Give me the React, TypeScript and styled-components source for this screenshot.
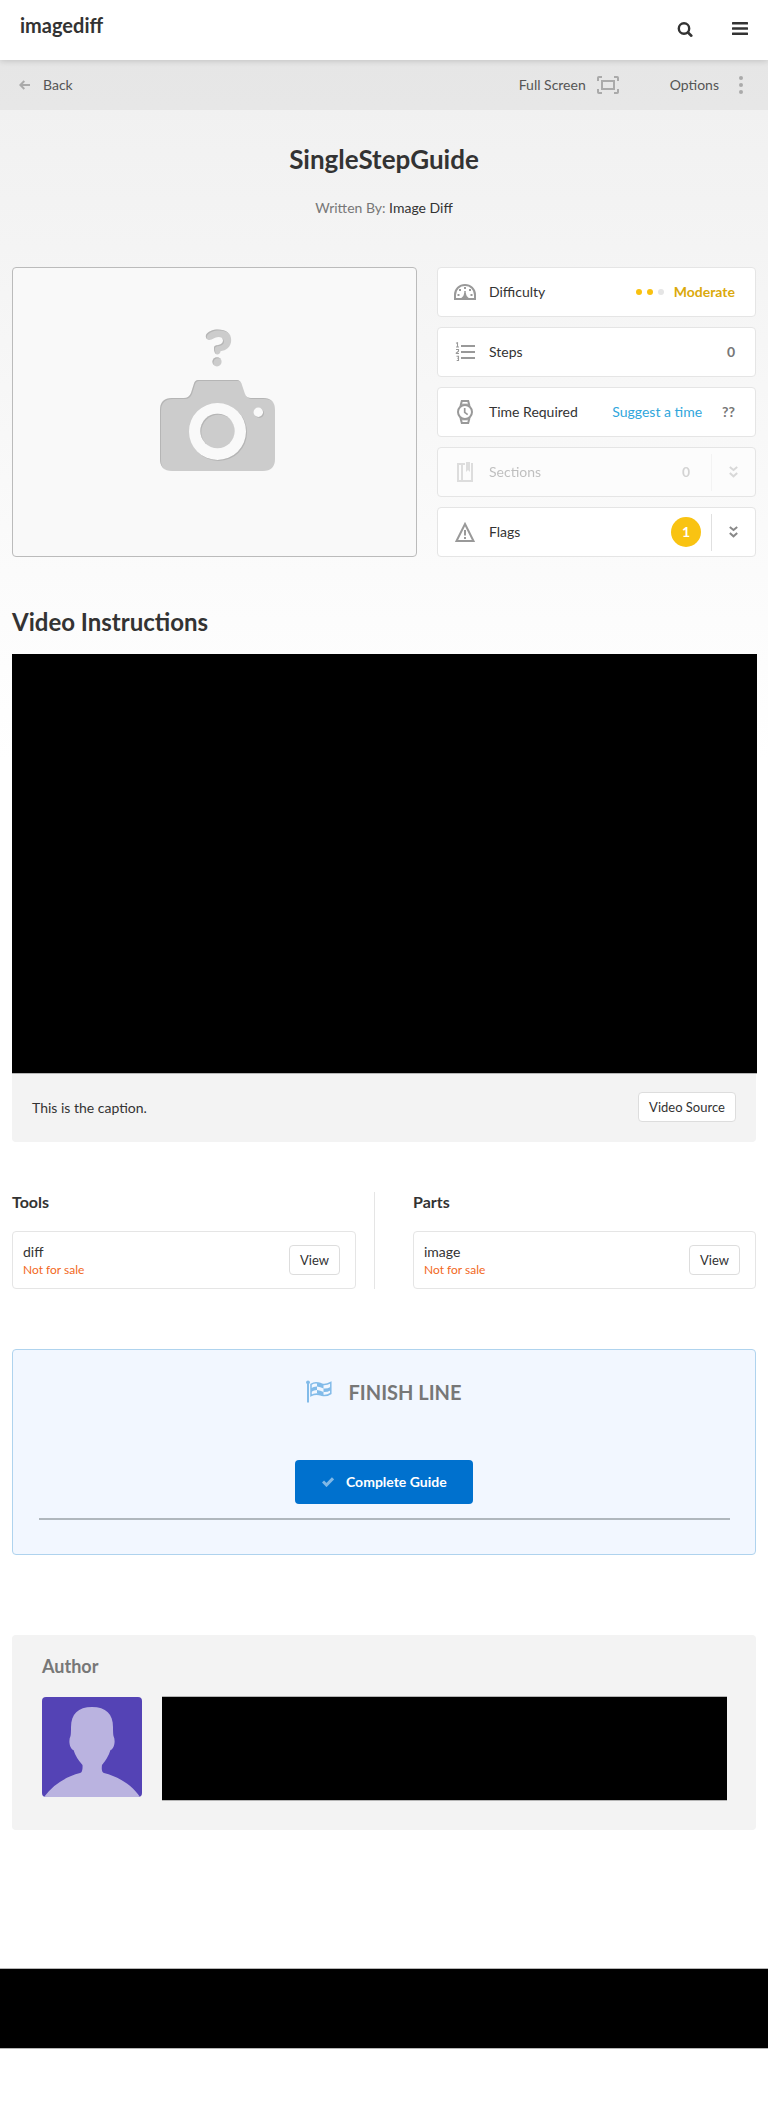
import React from 'react';
import styled, { createGlobalStyle } from 'styled-components';

const GlobalStyle = createGlobalStyle`
  * { box-sizing: border-box; }
  body {
    margin: 0;
    background: #fff;
    color: #333;
    font: 14px/20px Lato, sans-serif;
  }
  h1, h2, h3, p { margin: 0; }
  button { font-family: inherit; color: inherit; }
  svg { display: block; flex: none; }
`;

const Page = styled.div`
  display: flex;
  flex-direction: column;
  min-height: 2123px;
  background: linear-gradient(#f0f0f0 60px, #fff 760px);
`;

const Header = styled.header`
  display: flex;
  justify-content: space-between;
  height: 60px;
  padding: 0 20px;
  background: #fff;
  box-shadow: 0 1px 6px rgba(0, 0, 0, 0.16);
  z-index: 1;
`;

const Logo = styled.div`
  padding-top: 13px;
  font-size: 20px;
  line-height: 24px;
  font-weight: 700;
`;

const HeaderIcons = styled.div`
  display: flex;
  gap: 39px;
  padding-top: 22px;
`;

const Toolbar = styled.nav`
  display: flex;
  align-items: center;
  height: 50px;
  padding: 0 25px 0 19px;
  background: rgba(0, 0, 0, 0.04);
  color: #555;
`;

const ToolbarItem = styled.div<{ $gap: number; $push?: boolean; $before?: number }>`
  display: flex;
  align-items: center;
  gap: ${p => p.$gap}px;
  margin-left: ${p => (p.$push ? 'auto' : `${p.$before ?? 0}px`)};
`;

const Intro = styled.section`
  height: 157px;
  padding-top: 33px;
  text-align: center;
`;

const Title = styled.h1`
  font-size: 26px;
  line-height: 32px;
  font-weight: 700;
`;

const Byline = styled.p`
  margin-top: 23px;
  color: #777;
  span { color: #333; }
`;

const Summary = styled.section`
  display: grid;
  grid-template-columns: 405px 319px;
  gap: 20px;
  padding: 0 12px;
`;

const Thumbnail = styled.div`
  height: 290px;
  border: 1px solid #bbb;
  border-radius: 4px;
  background: #f9f9f9;
`;

const Facts = styled.div`
  display: flex;
  flex-direction: column;
  gap: 10px;
`;

const Fact = styled.div`
  height: 50px;
  border: 1px solid #e5e5e5;
  border-radius: 4px;
  background: #fff;
`;

const FactBody = styled.div<{ $faded?: boolean; $expands?: boolean }>`
  display: flex;
  align-items: center;
  height: 100%;
  padding: 0 ${p => (p.$expands ? 17 : 20)}px 0 16px;
  opacity: ${p => (p.$faded ? 0.3 : 1)};
`;

const FadedFact = styled(Fact)`
  background: #fcfcfc;
`;

const FactLabel = styled.span`
  margin: 0 auto 0 13px;
`;

const FactValue = styled.span<{ $color?: string; $right?: number }>`
  color: ${p => p.$color ?? '#777'};
  font-weight: 700;
  margin-right: ${p => p.$right ?? 0}px;
`;

const Suggest = styled.a`
  color: #2fa6dc;
  margin-right: 20px;
`;

const Dots = styled.span`
  display: flex;
  gap: 5px;
  margin-right: 10px;
`;

const Dot = styled.i<{ $on?: boolean }>`
  width: 6px;
  height: 6px;
  border-radius: 50%;
  background: ${p => (p.$on ? '#f9c10f' : '#e5e5e5')};
`;

const Badge = styled.span`
  width: 30px;
  margin-right: 10px;
  border-radius: 50%;
  background: #f9c312;
  color: #fff;
  font-weight: 700;
  line-height: 30px;
  text-align: center;
`;

const Rule = styled.i`
  width: 1px;
  height: 37px;
  margin-right: 17px;
  background: #e0e0e0;
`;

const SectionTitle = styled.h2`
  margin: 49px 12px 16px;
  font-size: 24px;
  line-height: 32px;
  font-weight: 700;
`;

const Video = styled.div`
  width: 745px;
  height: 420px;
  margin-left: 12px;
  background: #000;
  border-bottom: 1px solid #b5b5b5;
`;

const Caption = styled.div`
  display: flex;
  justify-content: space-between;
  height: 68px;
  margin: 0 12px;
  padding: 18px 20px 0;
  border-radius: 0 0 4px 4px;
  background: #f3f3f3;
  p { padding-top: 6px; }
`;

const SmallButton = styled.button<{ $width: number }>`
  width: ${p => p.$width}px;
  height: 30px;
  padding: 0;
  border: 1px solid #ddd;
  border-radius: 4px;
  background: #fff;
  font-size: 13px;
  line-height: 28px;
`;

const Supplies = styled.section`
  display: grid;
  grid-template-columns: 363px 343px;
  column-gap: 38px;
  height: 97px;
  margin: 50px 12px 0;
`;

const Supply = styled.div<{ $ruled?: boolean }>`
  padding-right: ${p => (p.$ruled ? 18 : 0)}px;
  border-right: ${p => (p.$ruled ? '1px solid #e5e5e5' : '0')};
  h3 { font-size: 16px; line-height: 20px; }
`;

const SupplyCard = styled.div`
  display: flex;
  justify-content: space-between;
  height: 58px;
  margin-top: 19px;
  padding: 13px 15px 0 10px;
  border: 1px solid #e5e5e5;
  border-radius: 4px;
  background: #fff;
`;

const SupplyText = styled.div`
  margin-top: -2px;
  line-height: 18px;
  small { display: block; font-size: 12px; line-height: 17px; color: #f26722; }
`;

const Finish = styled.section`
  display: flex;
  flex-direction: column;
  align-items: center;
  height: 206px;
  margin: 60px 12px 0;
  padding: 30px 26px 0;
  border: 1px solid #afd3ee;
  border-radius: 4px;
  background: #f2f7ff;
`;

const FinishTitle = styled.div`
  display: flex;
  gap: 16px;
  color: #777;
  font-size: 20px;
  line-height: 24px;
  font-weight: 700;
`;

const CompleteButton = styled.button`
  display: flex;
  align-items: center;
  gap: 12px;
  width: 178px;
  height: 44px;
  margin-top: 56px;
  padding: 0 0 1px 27px;
  border: 0;
  border-radius: 4px;
  background: #0071ce;
  color: #fff;
  font-size: 14px;
  font-weight: 700;
`;

const FinishRule = styled.div`
  width: 691px;
  height: 2px;
  margin-top: 14px;
  background: #b0b7bd;
`;

const Author = styled.section`
  height: 195px;
  margin: 80px 12px 0;
  padding: 20px 29px 0 30px;
  border-radius: 4px;
  background: #f3f3f3;
  h2 { color: #777; font-size: 18px; line-height: 22px; }
`;

const AuthorRow = styled.div`
  display: grid;
  grid-template-columns: 100px 565px;
  gap: 20px;
  margin-top: 19px;
`;

const Avatar = styled.div`
  height: 100px;
  margin-top: 1px;
  border-radius: 4px;
  overflow: hidden;
`;

const BlackPanel = styled.div<{ $height: number }>`
  height: ${p => p.$height}px;
  border: solid #b5b5b5;
  border-width: 1px 0;
  background: #000;
`;

const Footer = styled.footer`
  margin-top: 138px;
`;

const SearchIcon = () => (
  <svg width="16" height="16" viewBox="0 0 16 16" fill="none" stroke="#333">
    <circle cx="7" cy="6.500" r="5.200" strokeWidth="2.400" />
    <path d="M11 10.500 14.300 13.700" strokeWidth="2.600" strokeLinecap="round" />
  </svg>
);

const MenuIcon = () => (
  <svg width="16" height="14" viewBox="0 0 16 14" fill="#333">
    <rect width="16" height="2.6" rx=".5" />
    <rect y="5.2" width="16" height="2.6" rx=".5" />
    <rect y="10.4" width="16" height="2.6" rx=".5" />
  </svg>
);

const BackIcon = () => (
  <svg width="11" height="10" viewBox="0 0 11 10" fill="none" stroke="#aaa" strokeWidth="2">
    <path d="M11 5H2M5.3 1 1.3 5l4 4" />
  </svg>
);

const FullScreenIcon = () => (
  <svg width="22" height="18" viewBox="0 0 22 18" fill="none" stroke="#aaa" strokeWidth="2">
    <path d="M1 5V1.8Q1 1 1.8 1H5M17 1h3.2q.8 0 .8.8V5M21 13v3.2q0 .8-.8.8H17M5 17H1.8Q1 17 1 16.200V13" />
    <rect x="5" y="5" width="12" height="8" />
  </svg>
);

const OptionsIcon = () => (
  <svg width="4" height="18" viewBox="0 0 4 18" fill="#aaa">
    <circle cx="2" cy="2" r="2" /><circle cx="2" cy="9" r="2" /><circle cx="2" cy="16" r="2" />
  </svg>
);

const CameraArt = () => (
  <svg width="403" height="288" viewBox="13 268 403 288">
    <defs>
      <filter id="inset" x="-10%" y="-10%" width="120%" height="120%">
        <feOffset in="SourceAlpha" dx="1" dy="1" result="moved" />
        <feGaussianBlur in="moved" stdDeviation=".6" result="soft" />
        <feComposite in="SourceGraphic" in2="soft" operator="out" result="edge" />
        <feFlood floodColor="#999" floodOpacity=".5" />
        <feComposite in2="edge" operator="in" result="shade" />
        <feMerge><feMergeNode in="SourceGraphic" /><feMergeNode in="shade" /></feMerge>
      </filter>
    </defs>
    <g filter="url(#inset)" fill="#ccc">
      <path fillRule="evenodd" d="M172 398H184Q189 398 191 393L194 383.500Q195 380 198 380H237Q240 380 241.500 383.500L245 394Q246.500 398 251 398H263Q275 398 275 410V459Q275 470.900 263 470.900H172Q160 470.900 160 459V410Q160 398 172 398ZM217.500 403A28.500 28.500 0 1 0 217.500 460A28.500 28.500 0 1 0 217.500 403ZM258.300 407.500A4.700 4.700 0 1 0 258.300 417A4.700 4.700 0 1 0 258.300 407.500Z" />
      <circle cx="217.500" cy="431" r="17.200" />
      <path d="M206 335C207.500 331.500 213 329.500 218 329.500C226 329.500 231.200 333.500 231.200 340C231.200 347 226 350.500 220.500 351.200C220.500 353 219 354.400 217.300 354.400C214.800 354.400 214 351 214 348C214 345.500 216 345.500 218 345C221 344.500 223 343 223 340.500C223 338 221 337 218.500 337C214.500 337 212.500 340 209.500 340C207 340 205.200 337.500 206 335Z" />
      <circle cx="217" cy="361.800" r="4.600" />
    </g>
  </svg>
);

const GaugeIcon = () => (
  <svg width="22" height="16" viewBox="0 0 22 16" fill="none" stroke="#999" strokeWidth="2">
    <path d="M1 15V11C1 5 5.500 1 11 1S21 5 21 11V15Z" />
    <path d="M10 3h2v2h-2zM5 5h2v2H5zM15 5h2v2h-2zM3.500 10h2v2h-2zM16.500 10h2v2h-2z" fill="#999" stroke="none" />
    <path d="M11 7V11" strokeWidth="1.500" />
    <path d="M10.300 9h1.400l1 3 2 2H7.300l2-2z" fill="#999" stroke="none" />
  </svg>
);

const StepsIcon = () => (
  <svg width="22" height="20" viewBox="0 0 22 20" fill="none" stroke="#999">
    <path d="M7 4h14M7 10h14M7 16h14" strokeWidth="2" />
    <path d="M2 1.300 3.500.8V5M2 5h3M2 7.500h2.500v1.700L2.300 11v.5H5M2.500 14.200h2v4.300H2.700M3.300 16.300h1" strokeWidth="1.100" />
  </svg>
);

const WatchIcon = () => (
  <svg width="22" height="24" viewBox="0 0 22 24" fill="none" stroke="#999" strokeWidth="2">
    <circle cx="11" cy="12" r="7" />
    <path d="M6.500 6 7.800 1h6.400l1.300 5M6.500 18 7.800 23h6.400l1.300-5" />
    <path d="M8 4.200h6M8 19.800h6" strokeWidth="1" />
    <path d="M10.700 8v4.300l3 2.300" strokeWidth="1.700" />
  </svg>
);

const BookIcon = () => (
  <svg width="22" height="20" viewBox="0 0 22 20" fill="none" stroke="#999" strokeWidth="2">
    <path d="M11 2H4v17h14V2h-1M8 2v17" />
    <path d="M12 0h4v10l-2-2-2 2z" fill="#999" stroke="none" />
  </svg>
);

const WarningIcon = () => (
  <svg width="22" height="20" viewBox="0 0 22 20" fill="none" stroke="#999" strokeWidth="2">
    <path d="M11 2 19.500 19h-17zM11 8v5.500M11 15v2" />
  </svg>
);

const ExpandIcon = () => (
  <svg width="9" height="12" viewBox="0 0 9 12" fill="none" stroke="#888" strokeWidth="2">
    <path d="m.8 1 3.700 3L8.200 1M.8 7l3.700 3.300L8.200 7" />
  </svg>
);

const FlagIcon = () => (
  <svg width="26" height="23" viewBox="0 0 26 23" fill="none" stroke="#82bbe9">
    <circle cx="2" cy="2.300" r="1.900" fill="#82bbe9" stroke="none" />
    <path d="M2 2v20.500" strokeWidth="2" />
    <path d="M5 4.300C10 .8 13 3.300 16 4.200C19 5.100 22 4 24.800 2.500V13.500C22 15.300 19 16.200 16 15.200C13 14.200 10 12.800 5 15.600Z" strokeWidth="1.500" />
    <path d="M11 3Q14.500 3.200 17.500 5V8.500Q14.500 7.200 11 6.500ZM5 8.200Q8 6.300 11 6.500V10Q8 10 5 12ZM17.500 8.500Q21 9 24.800 6.700V10.200Q21 12.300 17.500 12ZM11 10Q14.500 10.500 17.500 12V15.500Q14.500 14.500 11 13.500Z" fill="#82bbe9" stroke="none" />
  </svg>
);

const CheckIcon = () => (
  <svg width="12" height="10" viewBox="0 0 12 10" fill="none" stroke="#80b8e6" strokeWidth="3">
    <path d="m1 4.500 3.500 3.500L11 1.300" />
  </svg>
);

const Silhouette = () => (
  <svg width="100" height="100" viewBox="0 0 100 100">
    <rect width="100" height="100" fill="#5443b5" />
    <path fill="#bab3e0" d="M2 100C11 88 23 80 38 76Q41 75 40.500 68Q34 61 31.500 53C28 52 26 44 28.500 39Q29 37 29 30C29 17 36 10 50 10S71 17 71 30Q71 37 71.500 39C74 44 72 52 68.500 53Q66 61 60 68Q59 75 62 76C77 80 90 88 98 100Z" />
  </svg>
);

export default function App() {
  return (
    <Page>
      <GlobalStyle />
      <Header>
        <Logo>imagediff</Logo>
        <HeaderIcons><SearchIcon /><MenuIcon /></HeaderIcons>
      </Header>
      <Toolbar>
        <ToolbarItem $gap={13}><BackIcon />Back</ToolbarItem>
        <ToolbarItem $gap={11} $push>Full Screen<FullScreenIcon /></ToolbarItem>
        <ToolbarItem $gap={20} $before={51}>Options<OptionsIcon /></ToolbarItem>
      </Toolbar>
      <Intro>
        <Title>SingleStepGuide</Title>
        <Byline>Written By: <span>Image Diff</span></Byline>
      </Intro>
      <Summary>
        <Thumbnail><CameraArt /></Thumbnail>
        <Facts>
          <Fact>
            <FactBody>
              <GaugeIcon /><FactLabel>Difficulty</FactLabel>
              <Dots><Dot $on /><Dot $on /><Dot /></Dots>
              <FactValue $color="#dba90b">Moderate</FactValue>
            </FactBody>
          </Fact>
          <Fact>
            <FactBody><StepsIcon /><FactLabel>Steps</FactLabel><FactValue>0</FactValue></FactBody>
          </Fact>
          <Fact>
            <FactBody>
              <WatchIcon /><FactLabel>Time Required</FactLabel>
              <Suggest>Suggest a time</Suggest><FactValue>??</FactValue>
            </FactBody>
          </Fact>
          <FadedFact>
            <FactBody $faded $expands>
              <BookIcon /><FactLabel>Sections</FactLabel>
              <FactValue $right={21}>0</FactValue><Rule /><ExpandIcon />
            </FactBody>
          </FadedFact>
          <Fact>
            <FactBody $expands>
              <WarningIcon /><FactLabel>Flags</FactLabel>
              <Badge>1</Badge><Rule /><ExpandIcon />
            </FactBody>
          </Fact>
        </Facts>
      </Summary>
      <SectionTitle>Video Instructions</SectionTitle>
      <Video />
      <Caption>
        <p>This is the caption.</p>
        <SmallButton $width={98}>Video Source</SmallButton>
      </Caption>
      <Supplies>
        <Supply $ruled>
          <h3>Tools</h3>
          <SupplyCard>
            <SupplyText>diff<small>Not for sale</small></SupplyText>
            <SmallButton $width={51}>View</SmallButton>
          </SupplyCard>
        </Supply>
        <Supply>
          <h3>Parts</h3>
          <SupplyCard>
            <SupplyText>image<small>Not for sale</small></SupplyText>
            <SmallButton $width={51}>View</SmallButton>
          </SupplyCard>
        </Supply>
      </Supplies>
      <Finish>
        <FinishTitle><FlagIcon />FINISH LINE</FinishTitle>
        <CompleteButton><CheckIcon />Complete Guide</CompleteButton>
        <FinishRule />
      </Finish>
      <Author>
        <h2>Author</h2>
        <AuthorRow>
          <Avatar><Silhouette /></Avatar>
          <BlackPanel $height={105} />
        </AuthorRow>
      </Author>
      <Footer><BlackPanel $height={81} /></Footer>
    </Page>
  );
}
